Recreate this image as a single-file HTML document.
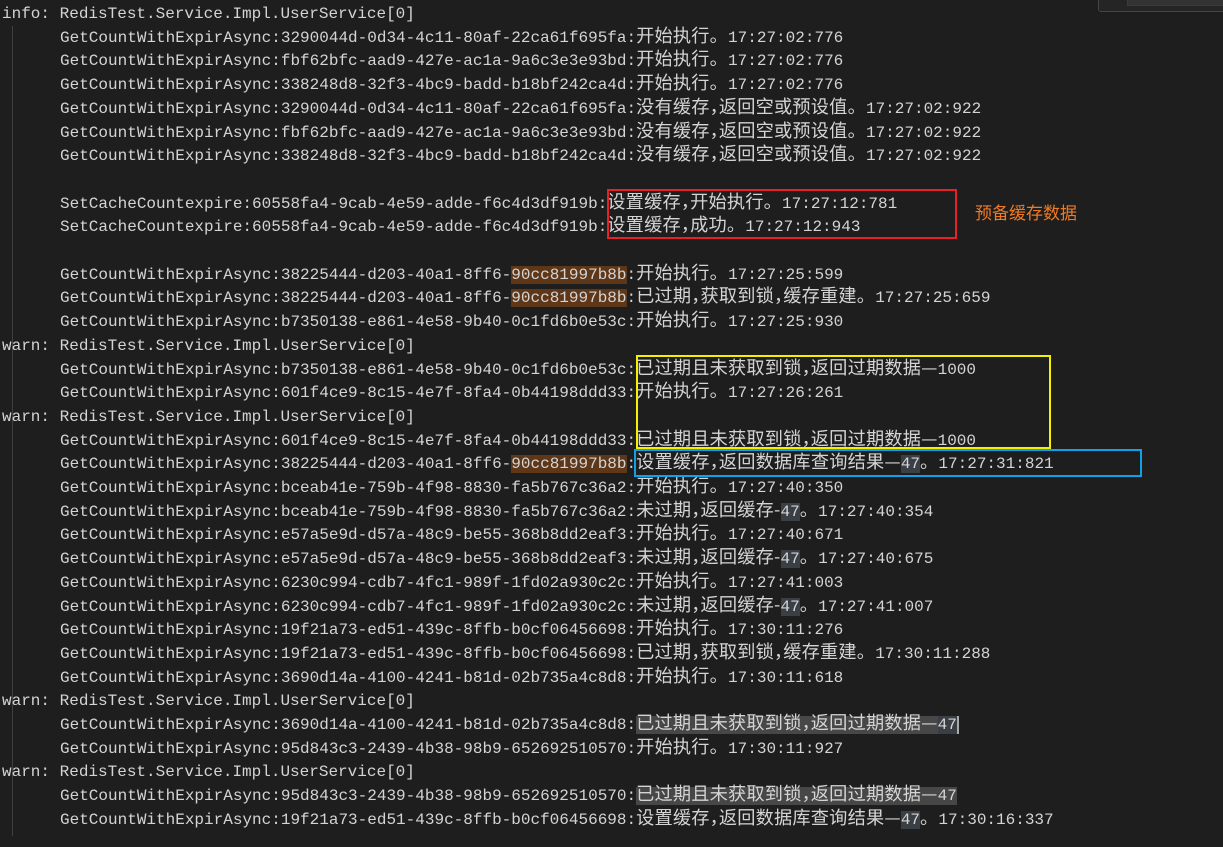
<!DOCTYPE html>
<html><head><meta charset="utf-8"><style>
html,body{margin:0;padding:0;background:#1e1e1e;width:1223px;height:847px;overflow:hidden;position:relative}
.l{position:absolute;left:2px;height:24px;line-height:24px;white-space:pre;color:#d4d4d4;font-family:"Liberation Mono","Noto Sans CJK SC",monospace;font-size:16px;letter-spacing:0px}
.i{left:60px}
.c{font-family:"Noto Sans CJK SC","Microsoft YaHei",sans-serif;font-size:18.2px;letter-spacing:0.2px;line-height:16px}
.m{letter-spacing:-9px}
.o{background:#5e3618}
.s{background:#474747}
.n{background:#3a3f46}
.box{position:absolute;border:2px solid;box-sizing:border-box}
</style></head><body>
<div style="position:absolute;left:12px;top:26px;width:1px;height:810px;background:#404040"></div>
<div style="position:absolute;left:1098px;top:-2px;width:130px;height:12px;border:1px solid #454545;background:#252526;border-radius:3px"></div>
<div style="position:absolute;left:1127px;top:-2px;width:100px;height:6px;background:#333;border:1px solid #3c3c3c"></div>

<div class="l" style="top:2px">info: RedisTest.Service.Impl.UserService[0]</div>
<div class="l i" style="top:25.7px">GetCountWithExpirAsync:3290044d-0d34-4c11-80af-22ca61f695fa:<span class="c">开始执行。</span>17:27:02:776</div>
<div class="l i" style="top:49.4px">GetCountWithExpirAsync:fbf62bfc-aad9-427e-ac1a-9a6c3e3e93bd:<span class="c">开始执行。</span>17:27:02:776</div>
<div class="l i" style="top:73.1px">GetCountWithExpirAsync:338248d8-32f3-4bc9-badd-b18bf242ca4d:<span class="c">开始执行。</span>17:27:02:776</div>
<div class="l i" style="top:96.8px">GetCountWithExpirAsync:3290044d-0d34-4c11-80af-22ca61f695fa:<span class="c">没有缓存<span class="m">，</span>返回空或预设值。</span>17:27:02:922</div>
<div class="l i" style="top:120.5px">GetCountWithExpirAsync:fbf62bfc-aad9-427e-ac1a-9a6c3e3e93bd:<span class="c">没有缓存<span class="m">，</span>返回空或预设值。</span>17:27:02:922</div>
<div class="l i" style="top:144.2px">GetCountWithExpirAsync:338248d8-32f3-4bc9-badd-b18bf242ca4d:<span class="c">没有缓存<span class="m">，</span>返回空或预设值。</span>17:27:02:922</div>

<div class="l i" style="top:191.6px">SetCacheCountexpire:60558fa4-9cab-4e59-adde-f6c4d3df919b:<span class="c">设置缓存<span class="m">，</span>开始执行。</span>17:27:12:781</div>
<div class="l i" style="top:215.3px">SetCacheCountexpire:60558fa4-9cab-4e59-adde-f6c4d3df919b:<span class="c">设置缓存<span class="m">，</span>成功。</span>17:27:12:943</div>

<div class="l i" style="top:262.7px">GetCountWithExpirAsync:38225444-d203-40a1-8ff6-<span class="o">90cc81997b8b</span>:<span class="c">开始执行。</span>17:27:25:599</div>
<div class="l i" style="top:286.4px">GetCountWithExpirAsync:38225444-d203-40a1-8ff6-<span class="o">90cc81997b8b</span>:<span class="c">已过期<span class="m">，</span>获取到锁<span class="m">，</span>缓存重建。</span>17:27:25:659</div>
<div class="l i" style="top:310.1px">GetCountWithExpirAsync:b7350138-e861-4e58-9b40-0c1fd6b0e53c:<span class="c">开始执行。</span>17:27:25:930</div>
<div class="l" style="top:333.8px">warn: RedisTest.Service.Impl.UserService[0]</div>
<div class="l i" style="top:357.5px">GetCountWithExpirAsync:b7350138-e861-4e58-9b40-0c1fd6b0e53c:<span class="c">已过期且未获取到锁<span class="m">，</span>返回过期数据—</span>1000</div>
<div class="l i" style="top:381.2px">GetCountWithExpirAsync:601f4ce9-8c15-4e7f-8fa4-0b44198ddd33:<span class="c">开始执行。</span>17:27:26:261</div>
<div class="l" style="top:404.9px">warn: RedisTest.Service.Impl.UserService[0]</div>
<div class="l i" style="top:428.6px">GetCountWithExpirAsync:601f4ce9-8c15-4e7f-8fa4-0b44198ddd33:<span class="c">已过期且未获取到锁<span class="m">，</span>返回过期数据—</span>1000</div>
<div class="l i" style="top:452.3px">GetCountWithExpirAsync:38225444-d203-40a1-8ff6-<span class="o">90cc81997b8b</span>:<span class="c">设置缓存<span class="m">，</span>返回数据库查询结果—</span><span class="n">47</span><span class="c">。</span>17:27:31:821</div>
<div class="l i" style="top:476px">GetCountWithExpirAsync:bceab41e-759b-4f98-8830-fa5b767c36a2:<span class="c">开始执行。</span>17:27:40:350</div>
<div class="l i" style="top:499.7px">GetCountWithExpirAsync:bceab41e-759b-4f98-8830-fa5b767c36a2:<span class="c">未过期<span class="m">，</span>返回缓存-</span><span class="n">47</span><span class="c">。</span>17:27:40:354</div>
<div class="l i" style="top:523.4px">GetCountWithExpirAsync:e57a5e9d-d57a-48c9-be55-368b8dd2eaf3:<span class="c">开始执行。</span>17:27:40:671</div>
<div class="l i" style="top:547.1px">GetCountWithExpirAsync:e57a5e9d-d57a-48c9-be55-368b8dd2eaf3:<span class="c">未过期<span class="m">，</span>返回缓存-</span><span class="n">47</span><span class="c">。</span>17:27:40:675</div>
<div class="l i" style="top:570.8px">GetCountWithExpirAsync:6230c994-cdb7-4fc1-989f-1fd02a930c2c:<span class="c">开始执行。</span>17:27:41:003</div>
<div class="l i" style="top:594.5px">GetCountWithExpirAsync:6230c994-cdb7-4fc1-989f-1fd02a930c2c:<span class="c">未过期<span class="m">，</span>返回缓存-</span><span class="n">47</span><span class="c">。</span>17:27:41:007</div>
<div class="l i" style="top:618.2px">GetCountWithExpirAsync:19f21a73-ed51-439c-8ffb-b0cf06456698:<span class="c">开始执行。</span>17:30:11:276</div>
<div class="l i" style="top:641.9px">GetCountWithExpirAsync:19f21a73-ed51-439c-8ffb-b0cf06456698:<span class="c">已过期<span class="m">，</span>获取到锁<span class="m">，</span>缓存重建。</span>17:30:11:288</div>
<div class="l i" style="top:665.6px">GetCountWithExpirAsync:3690d14a-4100-4241-b81d-02b735a4c8d8:<span class="c">开始执行。</span>17:30:11:618</div>
<div class="l" style="top:689.3px">warn: RedisTest.Service.Impl.UserService[0]</div>
<div class="l i" style="top:713px">GetCountWithExpirAsync:3690d14a-4100-4241-b81d-02b735a4c8d8:<span class="s"><span class="c">已过期且未获取到锁<span class="m">，</span>返回过期数据—</span><span class="n">47</span></span><span style="border-left:2px solid #aaa"></span></div>
<div class="l i" style="top:736.7px">GetCountWithExpirAsync:95d843c3-2439-4b38-98b9-652692510570:<span class="c">开始执行。</span>17:30:11:927</div>
<div class="l" style="top:760.4px">warn: RedisTest.Service.Impl.UserService[0]</div>
<div class="l i" style="top:784.1px">GetCountWithExpirAsync:95d843c3-2439-4b38-98b9-652692510570:<span class="s"><span class="c">已过期且未获取到锁<span class="m">，</span>返回过期数据—</span>47</span></div>
<div class="l i" style="top:807.8px">GetCountWithExpirAsync:19f21a73-ed51-439c-8ffb-b0cf06456698:<span class="c">设置缓存<span class="m">，</span>返回数据库查询结果—</span><span class="n">47</span><span class="c">。</span>17:30:16:337</div>

<div class="box" style="left:607px;top:189px;width:350px;height:50px;border-color:#e8202a"></div>
<div style="position:absolute;left:975px;top:200px;color:#f07a24;font-family:'Noto Sans CJK SC',sans-serif;font-size:17px;line-height:24px">预备缓存数据</div>
<div class="box" style="left:636px;top:355px;width:415px;height:94px;border-color:#f5f000"></div>
<div class="box" style="left:634px;top:449px;width:508px;height:28px;border-color:#14a0e6"></div>
</body></html>
